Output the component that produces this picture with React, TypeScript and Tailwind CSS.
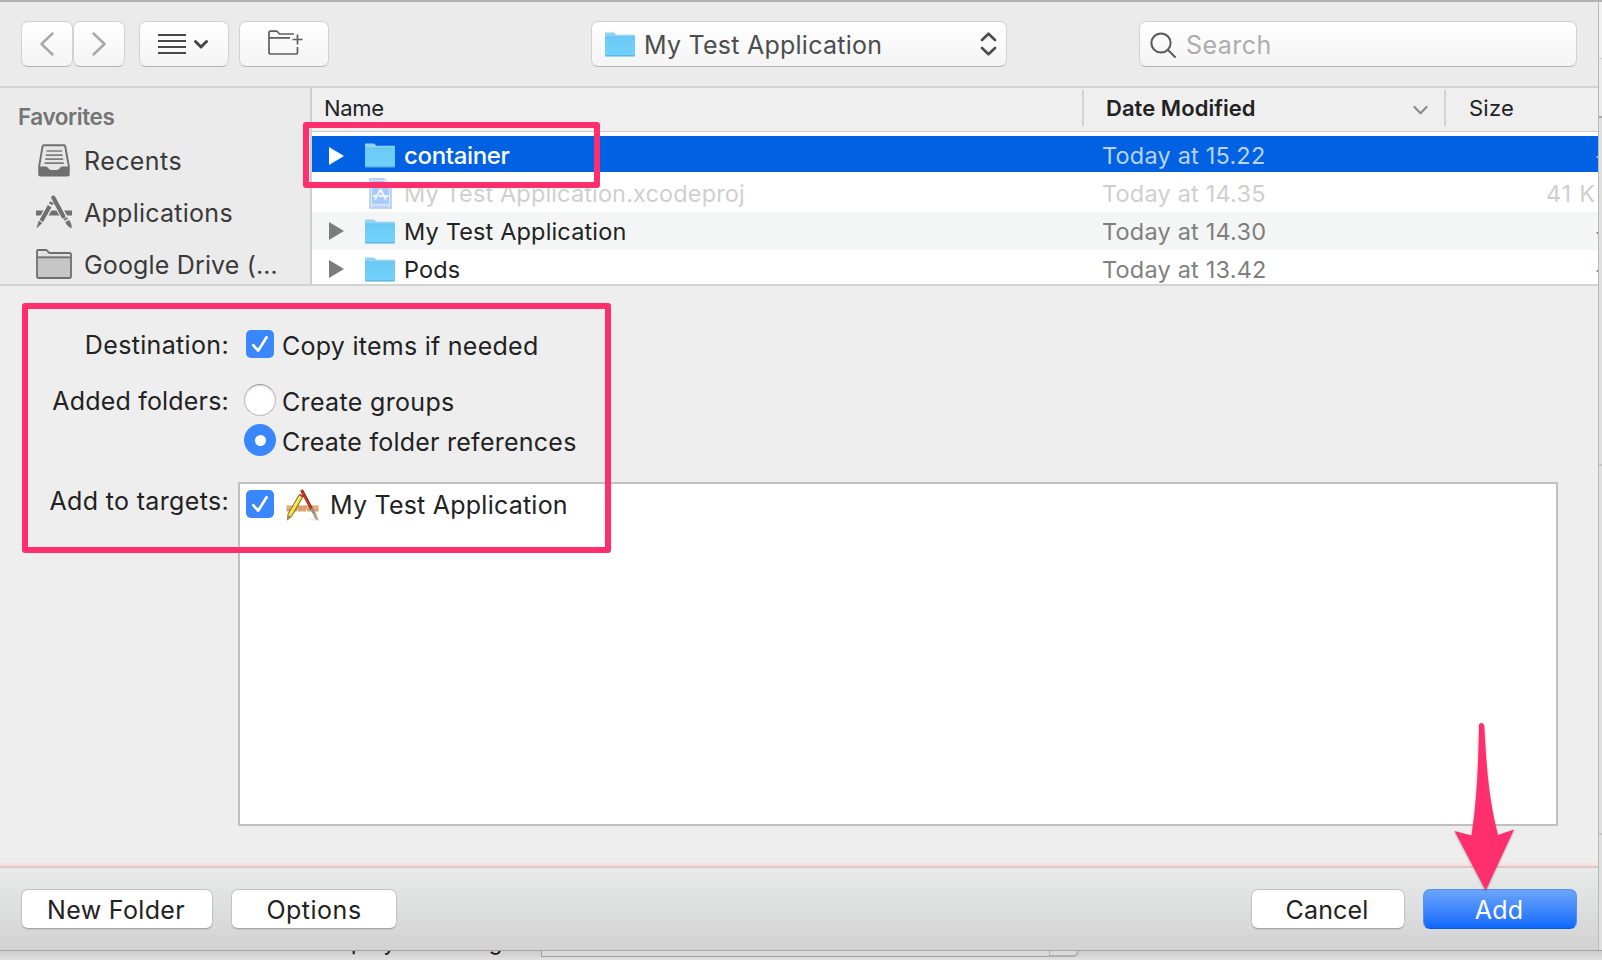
import type { ReactNode } from "react";

function BlueFolder() {
  return (
    <svg width="30" height="25" viewBox="0 0 30 25" className="shrink-0">
      <defs>
        <linearGradient id="folder" x1="0" y1="0" x2="0" y2="1">
          <stop offset="0" stopColor="#6ccbf6" />
          <stop offset="1" stopColor="#73d2fb" />
        </linearGradient>
      </defs>
      <path d="M0 1.2Q0 .4.8.4H8.6Q9.4.4 9.8 1L10.8 2.3Q11.2 2.8 12 2.8H29.2Q30 2.8 30 3.6V10H0Z" fill="#8cd4f5" />
      <path d="M0 5.4H30V23.2Q30 24.2 29 24.2H1Q0 24.2 0 23.2Z" fill="url(#folder)" />
      <path d="M0 5.1H30" stroke="#5bb5e2" strokeWidth=".8" />
      <path d="M.3 23.9H29.7" stroke="#4fa9d6" strokeWidth="1" />
    </svg>
  );
}

function ProjectIcon() {
  return (
    <svg width="23" height="31" viewBox="0 0 23 31" className="shrink-0">
      <path d="M1 1H15L22 8V30H1Z" fill="#dce9fd" stroke="#a9c6f6" strokeWidth="1.4" />
      <path d="M3 3H14L20 9V26H3Z" fill="#a9cbfb" />
      <path d="M15 1V8H22" fill="#f2f7ff" stroke="#b5cef7" />
      <path d="M3.5 28H19.5" stroke="#a9c6f6" strokeWidth="1" />
      <path d="M11.8 11L6 21.500M11.200 11L17 21.500M4 18H8M10 18H13.500M15.500 18H19.500" stroke="#f3f8ff" strokeWidth="2" fill="none" />
    </svg>
  );
}

function RecentsIcon() {
  return (
    <svg width="36" height="34" viewBox="0 0 36 34">
      <path d="M7.6 2.3H28.2Q29 2.3 29.200 3.200L32.800 23V31.500Q32.800 32.600 31.700 32.600H4.300Q3.200 32.600 3.200 31.500V23L6.600 3.200Q6.800 2.300 7.600 2.300Z" fill="#e6e6e6" stroke="#6f6f6f" strokeWidth="1.900" />
      <path d="M10.500 8H26M9.800 12.200H26.600M9.300 16.200H27.200M8.600 20.200H27.800" stroke="#7c7c7c" strokeWidth="1.700" />
      <path d="M3.200 23.500H9.500Q11.500 23.500 12.500 25.400Q13.500 27 18 27Q22.500 27 23.500 25.400Q24.500 23.500 26.500 23.500H32.800V32.600H3.200Z" fill="#707070" />
    </svg>
  );
}

function ApplicationsIcon() {
  return (
    <svg width="36" height="34" viewBox="0 0 36 34">
      <path d="M0 15.500H8.500L5.800 20.500H0ZM14.500 15.500H21.500L24 20.500H11.500ZM27 15.500H36V20.500H29.800Z" fill="#707070" />
      <path d="M17.600 4.200L5.800 25.600" stroke="#ebebeb" strokeWidth="7" />
      <path d="M16.800 2.500L31 27" stroke="#ebebeb" strokeWidth="6.500" />
      <path d="M15.900 7.200L14.700 9.300M13.700 11.100L5.300 26" stroke="#707070" strokeWidth="4.200" />
      <path d="M2.700 25.800L6.300 27.900L.4 33.400Z" fill="#707070" />
      <path d="M17.400 2.700L27.300 21.300" stroke="#707070" strokeWidth="4.200" strokeLinecap="round" />
      <path d="M27.600 24L31 22.200L32 23.800L28.600 25.800ZM29.200 27L33.200 24.900Q36 28.500 35.700 33.500Q30.800 31 29.200 27Z" fill="#707070" />
    </svg>
  );
}

function GrayFolderIcon() {
  return (
    <svg width="36" height="30" viewBox="0 0 36 30">
      <path d="M1 27.800V2.300Q1 1 2.300 1H9.700Q10.600 1 11.200 1.700L12.800 3.500Q13.300 4 14.200 4H33.700Q35 4 35 5.300V27.800Q35 29 33.800 29H2.200Q1 29 1 27.800Z" fill="#c6c6c6" stroke="#6f6f6f" strokeWidth="1.800" />
      <path d="M2 2H10L12.500 5H34V7.300H2Z" fill="#e2e2e2" />
      <path d="M1.500 8.300H34.500" stroke="#6f6f6f" strokeWidth="1.700" />
    </svg>
  );
}

function TargetIcon() {
  return (
    <svg width="33" height="33" viewBox="0 0 33 33" className="shrink-0">
      <path d="M20 29.500H33V31.500H27Z" fill="#ececec" />
      <path d="M.5 16.500H32.500V22.500H.5Z" fill="#d9a26b" />
      <path d="M.5 18.500H32.500" stroke="#e9bd8b" strokeWidth="1.400" />
      <path d="M10.500 23L16 13L22 23Z" fill="#fff" />
      <path d="M12 19.500H20" stroke="#d9a26b" strokeWidth="6" />
      <path d="M15.200 6.500L3.500 26.800" stroke="#6b5a28" strokeWidth="5" />
      <path d="M15.200 6.500L3.500 26.800" stroke="#f2dc30" strokeWidth="3.400" />
      <path d="M14.300 6.700L2.900 26.300" stroke="#fdf49a" strokeWidth="1" />
      <path d="M14.300 4.800L17.900 6.900L16.900 8.700L13.200 6.600Z" fill="#c23c2c" />
      <path d="M1.300 25.600L5.700 28.200L.8 31.800Z" fill="#a9824e" />
      <path d="M15.500 1L25.800 20.200" stroke="#8c1d12" strokeWidth="3" />
      <path d="M15.200 1L25.500 19.800" stroke="#d5412c" strokeWidth="1.300" />
      <path d="M25.500 19.500L28.600 25" stroke="#8f8f8f" strokeWidth="3" />
      <path d="M27 25.500L30 24L32.600 31.500Q28.500 31 27 25.500Z" fill="#c59c80" />
    </svg>
  );
}

function Checkbox() {
  return (
    <span className="flex size-7 shrink-0 items-center justify-center rounded-[5px] bg-[#3a86fc]">
      <svg width="28" height="28" viewBox="0 0 28 28" fill="none" stroke="#fff" strokeWidth="2.700" strokeLinecap="round" strokeLinejoin="round">
        <path d="M7.300 15.300L12.200 20.600L20.600 7.300" />
      </svg>
    </span>
  );
}

function Radio({ on }: { on?: boolean }) {
  return on ? (
    <span className="flex size-8 shrink-0 items-center justify-center rounded-full bg-[#3a86fc]">
      <span className="size-[11px] rounded-full bg-white" />
    </span>
  ) : (
    <span className="size-8 shrink-0 rounded-full border border-[#bdbdbd] border-t-[#9c9c9c] bg-white shadow-[inset_0_1px_2px_rgba(0,0,0,0.14)]" />
  );
}

function ToolButton({ className, children }: { className: string; children: ReactNode }) {
  return (
    <div className={`flex h-[46px] shrink-0 items-center rounded-[7px] border border-[#d2d2d2] border-b-[#b4b4b4] bg-linear-to-b from-white to-[#f4f4f4] ${className}`}>
      {children}
    </div>
  );
}

function SideItem({ icon, label, spacing }: { icon: ReactNode; label: string; spacing: string }) {
  return (
    <div className="flex h-[52px] items-center">
      <span className="flex w-9 justify-center">{icon}</span>
      <span className={`ml-[11px] pt-px text-[25px] leading-[30px] whitespace-nowrap text-[#3a3a3a] ${spacing}`}>{label}</span>
    </div>
  );
}

type Row = {
  name: string;
  date: string;
  size: string;
  kind: "selected" | "disabled" | "normal";
  shade: string;
};

const rows: Row[] = [
  { name: "container", date: "Today at 15.22", size: "--", kind: "selected", shade: "bg-white" },
  { name: "My Test Application.xcodeproj", date: "Today at 14.35", size: "41 KB", kind: "disabled", shade: "bg-white" },
  { name: "My Test Application", date: "Today at 14.30", size: "--", kind: "normal", shade: "bg-[#f4f6f5]" },
  { name: "Pods", date: "Today at 13.42", size: "--", kind: "normal", shade: "bg-white" },
];

function FileRow({ row }: { row: Row }) {
  const sel = row.kind === "selected";
  const dis = row.kind === "disabled";
  const lift = sel ? "pt-[3px]" : "pt-[2px]";
  const muted = sel ? "text-[#b9d3f8]" : dis ? "text-[#cfcfcf]" : "text-[#7f7f7f]";
  return (
    <div className={`h-[38px] shrink-0 ${row.shade}`}>
      <div className={`flex items-center text-[23.5px] leading-9 whitespace-nowrap ${sel ? "h-9 bg-[#0062e3]" : "h-[38px]"}`}>
        <span className="ml-[17px] w-9 shrink-0">
          {!dis && (
            <svg width="15" height="18" viewBox="0 0 15 18" className={sel ? "mt-[3px]" : ""}>
              <path d="M0 0L15 9L0 18Z" fill={sel ? "#fff" : "#7c7c7c"} />
            </svg>
          )}
        </span>
        <span className={`flex w-[30px] shrink-0 justify-center ${sel ? "pt-[3px]" : ""}`}>{dis ? <ProjectIcon /> : <BlueFolder />}</span>
        <span
          className={`w-[698px] shrink-0 pl-[9px] ${lift} ${
            sel ? "text-[24px] font-medium tracking-[-0.35px] text-white" : dis ? "tracking-[0.14px] text-[#cfcfcf]" : "tracking-[0.16px] text-[#222]"
          }`}
        >
          {row.name}
        </span>
        <span className={`w-[444px] shrink-0 pl-[9px] tracking-[0.2px] ${lift} ${muted}`}>{row.date}</span>
        <span className={`shrink-0 tracking-[0.8px] ${dis ? "pl-[9px]" : "pl-[58px]"} ${lift} ${muted}`}>{row.size}</span>
      </div>
    </div>
  );
}

function Toolbar() {
  return (
    <header className="flex h-[84px] shrink-0 items-start bg-[#ebebeb] pt-[19px] pl-[21px]">
      <ToolButton className="w-[52px] justify-center">
        <svg width="14" height="24" viewBox="0 0 14 24" fill="none" stroke="#a9a9a9" strokeWidth="2.500" strokeLinecap="round" strokeLinejoin="round">
          <path d="M12.500 1.500L1.500 12L12.500 22.500" />
        </svg>
      </ToolButton>
      <ToolButton className="w-[52px] justify-center">
        <svg width="14" height="24" viewBox="0 0 14 24" fill="none" stroke="#a9a9a9" strokeWidth="2.500" strokeLinecap="round" strokeLinejoin="round">
          <path d="M1.500 1.500L12.500 12L1.500 22.500" />
        </svg>
      </ToolButton>
      <ToolButton className="ml-[14px] w-[90px] pl-[18px]">
        <svg width="50" height="24" viewBox="0 0 50 24" fill="none" stroke="#474747">
          <path d="M0 3H28M0 9H28M0 15H28M0 21H28" strokeWidth="2" />
          <path d="M37.500 9.500L43 15L48.500 9.500" strokeWidth="3" strokeLinecap="round" strokeLinejoin="round" />
        </svg>
      </ToolButton>
      <ToolButton className="ml-[10px] w-[90px] pl-[28px]">
        <svg width="35" height="26" viewBox="0 0 35 26" fill="none" stroke="#5e5e5e" strokeWidth="1.700" className="-mt-[3px]">
          <path d="M26 4H11.500L9.500 1.800Q9 1.200 8.200 1.200H2.200Q1 1.200 1 2.400V22.800Q1 24 2.200 24H28.300Q29.500 24 29.500 22.800V17" />
          <path d="M1 7.800H22M29.500 4.500V14.500M24.500 9.500H34.500" />
        </svg>
      </ToolButton>
      <ToolButton className="ml-[262px] w-[416px] pr-[9px] pl-[13px]">
        <BlueFolder />
        <span className="ml-[9px] flex-1 pt-px text-[25px] leading-[30px] tracking-[0.25px] text-[#4d4d4d]">My Test Application</span>
        <svg width="17" height="24" viewBox="0 0 17 24" fill="none" stroke="#4b4b4b" strokeWidth="2.600" strokeLinecap="round" strokeLinejoin="round">
          <path d="M2 8L8.500 1.700L15 8M2 16L8.500 22.300L15 16" />
        </svg>
      </ToolButton>
      <ToolButton className="ml-[132px] w-[438px] pl-[10px]">
        <svg width="27" height="27" viewBox="0 0 27 27" fill="none" stroke="#5a5a5a" strokeWidth="2" strokeLinecap="round" className="mt-[2px]">
          <circle cx="11" cy="11" r="9.600" />
          <path d="M18 18L25 25" />
        </svg>
        <span className="ml-[9px] pt-px text-[25px] leading-[30px] tracking-[0.45px] text-[#adadad]">Search</span>
      </ToolButton>
    </header>
  );
}

function Browser() {
  return (
    <section className="flex h-[200px] shrink-0 overflow-hidden border-y-2 border-[#d3d3d3]">
      <aside className="w-[312px] shrink-0 border-r-2 border-[#cfcfcf] bg-[#ebebeb] pt-[14px] pl-9">
        <h2 className="-ml-[18px] h-[33px] text-[22.5px] leading-[30px] font-semibold tracking-[-0.43px] text-[#747474]">Favorites</h2>
        <div className="-mt-px">
          <SideItem icon={<RecentsIcon />} label="Recents" spacing="pl-px tracking-[0.42px]" />
          <SideItem icon={<ApplicationsIcon />} label="Applications" spacing="pl-px tracking-[0.26px]" />
          <SideItem icon={<GrayFolderIcon />} label="Google Drive (…" spacing="pl-px tracking-[0.16px]" />
        </div>
      </aside>
      <div className="flex min-w-0 flex-1 flex-col overflow-hidden bg-white">
        <div className="mb-1 flex h-[44px] shrink-0 border-b border-[#cbcbcb] bg-[#efefef] text-[22px] leading-10 text-[#222]">
          <span className="w-[770px] pl-[12px] tracking-[-0.3px]">Name</span>
          <span className="mt-[2px] h-9 w-[2px] bg-[#d3d3d3]" />
          <span className="flex w-[360px] items-center justify-between pr-[16px] pl-[22px]">
            <span className="-mt-[3px] font-semibold tracking-[0.05px]">Date Modified</span>
            <svg width="15" height="10" viewBox="0 0 15 10" fill="none" stroke="#8b8b8b" strokeWidth="2.200" strokeLinecap="round" strokeLinejoin="round">
              <path d="M1.500 2L7.500 8.200L13.500 2" />
            </svg>
          </span>
          <span className="mt-[2px] h-9 w-[2px] bg-[#d3d3d3]" />
          <span className="pl-[23px] tracking-[0.24px]">Size</span>
        </div>
        {rows.map((r) => (
          <FileRow key={r.name} row={r} />
        ))}
      </div>
    </section>
  );
}

function AddOptions() {
  return (
    <section className="flex h-[575px] shrink-0 bg-[#eeeeee] text-[25px] leading-10 whitespace-nowrap text-[#222]">
      <div className="flex w-[230px] shrink-0 flex-col items-end pt-[39px] pr-px">
        <span className="h-14 tracking-[0.34px]">Destination:</span>
        <span className="h-[100px] tracking-[0.19px]">Added folders:</span>
        <span className="tracking-[0.34px]">Add to targets:</span>
      </div>
      <div className="flex flex-1 flex-col pl-2">
        <div className="mt-[38px] flex h-10 items-center pl-2">
          <Checkbox />
          <span className="pt-[3px] pl-[8px] tracking-[0.26px]">Copy items if needed</span>
        </div>
        <div className="mt-4 flex h-10 items-center pl-1.5">
          <Radio />
          <span className="pt-[3px] pl-[6px] tracking-[0.33px]">Create groups</span>
        </div>
        <div className="flex h-10 items-center pl-1.5">
          <Radio on />
          <span className="pt-[3px] pl-[6px] tracking-[0.25px]">Create folder references</span>
        </div>
        <div className="mt-[22px] h-[344px] w-[1320px] border-2 border-[#c0c0c0] bg-white">
          <div className="flex h-10 items-center pl-1.5">
            <Checkbox />
            <span className="pt-[2px] pl-[12px]">
              <TargetIcon />
            </span>
            <span className="pt-[2px] pl-[11px] tracking-[0.23px]">My Test Application</span>
          </div>
        </div>
      </div>
    </section>
  );
}

function PushButton({ className, children }: { className: string; children: ReactNode }) {
  return <button className={`h-10 shrink-0 rounded-[7px] border pt-px text-center text-[25px] leading-[38px] ${className}`}>{children}</button>;
}

const plain = "border-[#c2c2c2] border-b-[#a6a6a6] bg-white text-[#222] shadow-[0_1px_1px_rgba(0,0,0,0.08)]";

export default function App() {
  return (
    <main className="relative flex h-[960px] w-[1602px] flex-col overflow-hidden bg-[#e2e2e2] font-[Inter,sans-serif]">
      <div className="h-[2px] shrink-0 bg-[#b2b2b2]" />
      <div className="flex h-[948px] shrink-0">
        <div className="flex w-[1598px] shrink-0 flex-col overflow-hidden">
          <Toolbar />
          <Browser />
          <AddOptions />
          <div className="h-[5px] shrink-0 bg-linear-to-b from-[#eeeeee] to-[#f9dcdc]" />
          <footer className="flex h-[84px] shrink-0 items-start border-t-2 border-[#dfc8c8] bg-linear-to-b from-[#e9eaea] to-[#d2d2d2] pt-[21px] pl-[21px]">
            <PushButton className={`w-[192px] pr-[2px] tracking-[0.33px] ${plain}`}>New Folder</PushButton>
            <PushButton className={`ml-[18px] w-[166px] tracking-[0.51px] ${plain}`}>Options</PushButton>
            <PushButton className={`ml-auto w-[154px] pr-[2px] tracking-[0.15px] ${plain}`}>Cancel</PushButton>
            <PushButton className="mr-[21px] ml-[18px] w-[154px] border-[#5590ec] border-b-[#0a5ce6] bg-linear-to-b from-[#6ba4fb] to-[#0a68fd] pr-[2px] tracking-[0.22px] text-white">Add</PushButton>
          </footer>
        </div>
        <div className="flex flex-1 flex-col border-l border-[#b9b9b9] bg-[#e0e0e0]">
          <div className="h-[57px] border-b border-[#cfcfcf] bg-[#f1f1f1]" />
          <div className="h-[59px] border-b-2 border-[#a9a9a9] bg-[#ececec]" />
          <div className="h-[348px] border-b-2 border-[#c6c6c6]" />
          <div className="h-[369px] border-b-2 border-[#c6c6c6]" />
        </div>
      </div>
      <div className="flex h-[10px] shrink-0 overflow-hidden border-t border-[#a6a6a6] bg-linear-to-b from-[#cccccc] to-[#e0e0e0] pl-[322px]">
        <span className="-mt-[22px] w-[219px] text-[22px] leading-[26px] tracking-[0.2px] whitespace-nowrap text-[#161616]">Deployment Target</span>
        <div className="h-[6px] w-[508px] border-b border-l border-[#a0a0a0] bg-[#dadada]" />
        <div className="h-[6px] w-[30px] rounded-br-[6px] border-r-2 border-b-2 border-l border-[#b0b0b0] bg-[#dadada]" />
      </div>

      <div className="absolute top-[122px] left-[303px] h-[66px] w-[297px] rounded-[3px] border-[6px] border-[#ff2e6d]" />
      <div className="absolute top-[303px] left-[22px] h-[250px] w-[589px] rounded-[3px] border-[6px] border-[#ff2e6d]" />
      <svg width="70" height="175" viewBox="0 0 70 175" className="absolute top-[720px] left-[1450px] drop-shadow-[0_1px_1px_rgba(0,0,0,0.3)]">
        <path d="M29 5.500Q29 3 31.500 3Q34 3 34.200 5.500C36.500 46 38.500 78 48 115L64 109.500L35.700 170.500L4.500 111L21.500 115.500C27 80 28.300 45 29 5.500Z" fill="#ff2e6d" />
      </svg>
    </main>
  );
}
